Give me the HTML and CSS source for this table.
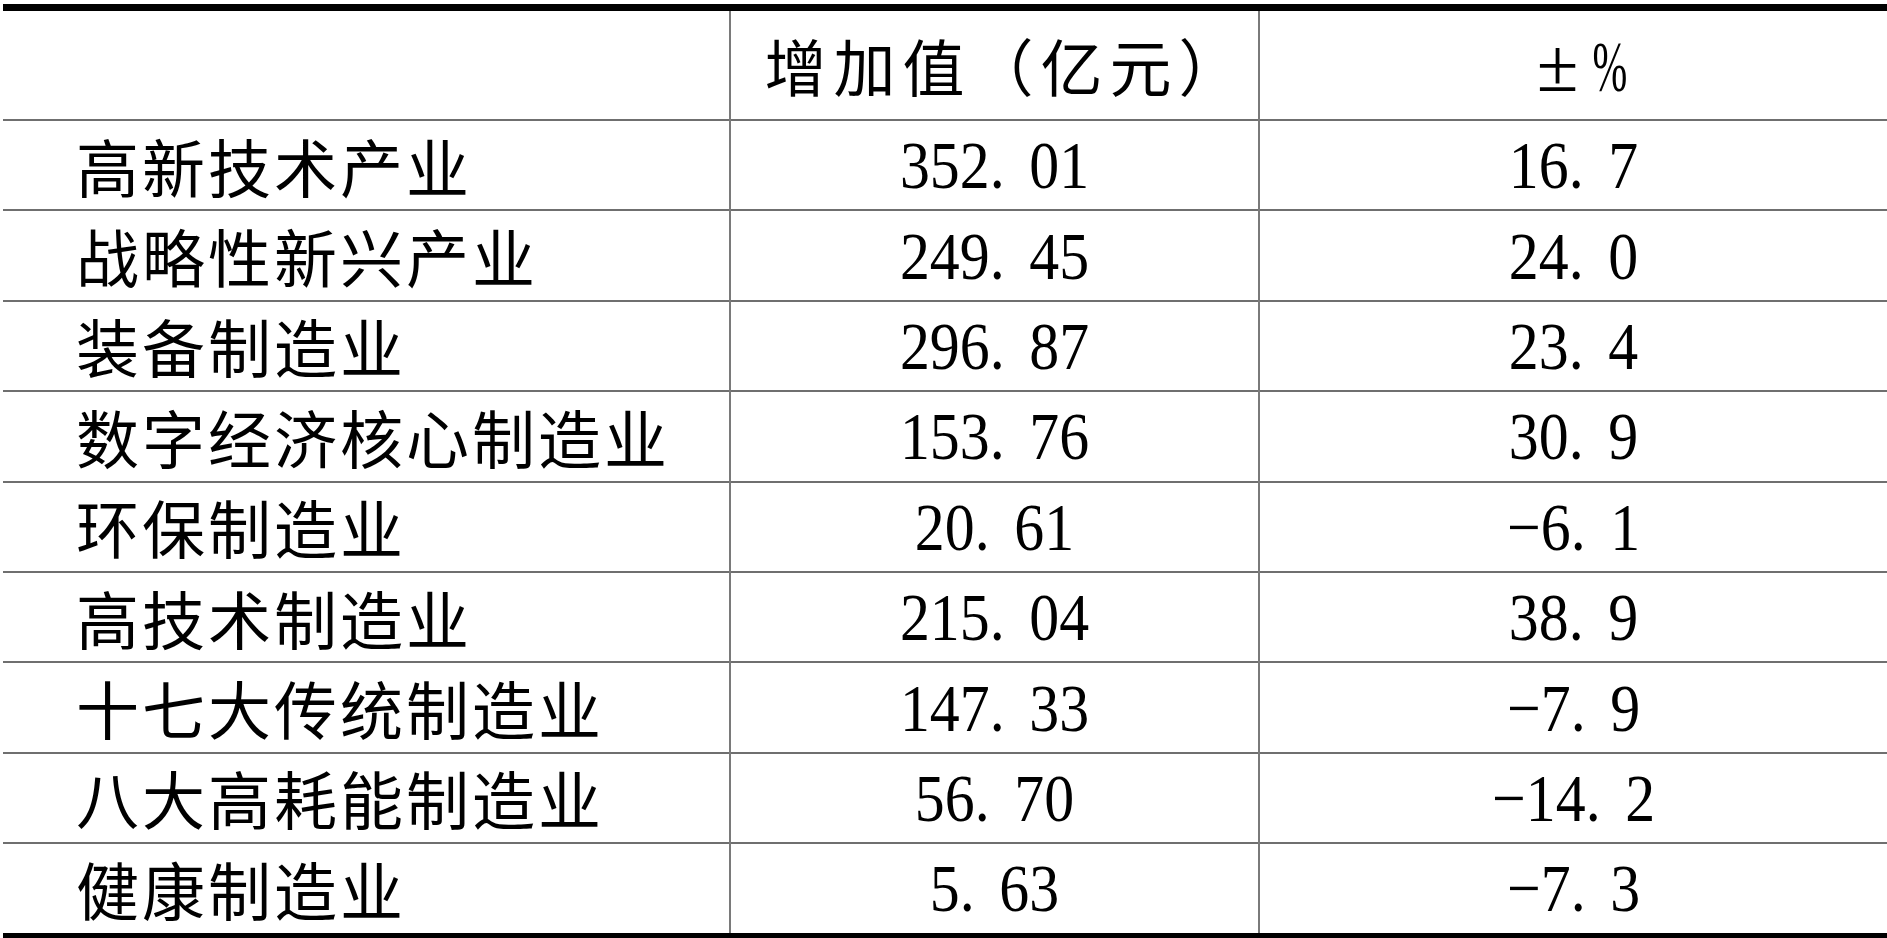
FILE: index.html
```html
<!DOCTYPE html>
<html lang="zh-CN">
<head>
<meta charset="utf-8">
<title>增加值</title>
<link rel="stylesheet" href="styles.css">
</head>
<body>
<table class="data">
  <colgroup>
    <col class="c-name">
    <col class="c-val">
    <col class="c-pct">
  </colgroup>
  <thead>
    <tr class="head">
      <th></th>
      <th class="cjk">增加值（亿元）</th>
      <th class="sym"><span class="pm">±</span><span class="pct">%</span></th>
    </tr>
  </thead>
  <tbody>
    <tr><td class="name">高新技术产业</td><td><span class="num">352<span class="pt">.</span>01</span></td><td><span class="num">16<span class="pt">.</span>7</span></td></tr>
    <tr><td class="name">战略性新兴产业</td><td><span class="num">249<span class="pt">.</span>45</span></td><td><span class="num">24<span class="pt">.</span>0</span></td></tr>
    <tr><td class="name">装备制造业</td><td><span class="num">296<span class="pt">.</span>87</span></td><td><span class="num">23<span class="pt">.</span>4</span></td></tr>
    <tr><td class="name">数字经济核心制造业</td><td><span class="num">153<span class="pt">.</span>76</span></td><td><span class="num">30<span class="pt">.</span>9</span></td></tr>
    <tr><td class="name">环保制造业</td><td><span class="num">20<span class="pt">.</span>61</span></td><td><span class="num">−6<span class="pt">.</span>1</span></td></tr>
    <tr><td class="name">高技术制造业</td><td><span class="num">215<span class="pt">.</span>04</span></td><td><span class="num">38<span class="pt">.</span>9</span></td></tr>
    <tr><td class="name">十七大传统制造业</td><td><span class="num">147<span class="pt">.</span>33</span></td><td><span class="num">−7<span class="pt">.</span>9</span></td></tr>
    <tr><td class="name">八大高耗能制造业</td><td><span class="num">56<span class="pt">.</span>70</span></td><td><span class="num">−14<span class="pt">.</span>2</span></td></tr>
    <tr><td class="name">健康制造业</td><td><span class="num">5<span class="pt">.</span>63</span></td><td><span class="num">−7<span class="pt">.</span>3</span></td></tr>
  </tbody>
</table>
</body>
</html>
```

FILE: styles.css
```css
html, body {
  margin: 0;
  padding: 0;
  background: #ffffff;
}

body {
  padding: 4px 0 0 3px;
  font-family: "Noto Sans CJK SC", "Noto Sans", sans-serif;
  color: #000;
}

.data {
  border-collapse: collapse;
  table-layout: fixed;
  width: 1884px;
  border-top: 7px solid #000;
  border-bottom: 7px solid #000;
}

.c-name { width: 727px; }
.c-val { width: 529px; }
.c-pct { width: 628px; }

.data th,
.data td {
  padding: 0;
  text-align: center;
  vertical-align: middle;
  font-weight: normal;
  border-left: 2px solid #7a7a7a;
  border-top: 2px solid #6f6f6f;
  line-height: 1;
}

.data th:first-child,
.data td:first-child {
  border-left: none;
}

.head th {
  height: 108px;
  border-top: none;
}

.data tbody td {
  height: 88.4px;
}

.data th.cjk {
  font-size: 62px;
  letter-spacing: 7px;
  padding-left: 23px;
}

.data th.sym {
  padding-left: 18px;
}

.data td.name {
  text-align: left;
  padding-left: 73px;
  padding-bottom: 2px;
  height: 86.4px;
  font-size: 63px;
  letter-spacing: 3px;
}

.num {
  display: inline-block;
  font-family: "Liberation Serif", "Times New Roman", serif;
  font-size: 68px;
  transform: scaleX(0.88);
  letter-spacing: 0;
}

.pt {
  padding-right: 28px;
}

.pm {
  display: inline-block;
  font-family: "Liberation Serif", serif;
  font-size: 76px;
  margin-right: 14px;
}

.pct {
  display: inline-block;
  font-family: "Liberation Serif", serif;
  font-size: 72px;
  transform: scaleX(0.58);
  margin-left: -12px;
  margin-right: -12px;
}
```
